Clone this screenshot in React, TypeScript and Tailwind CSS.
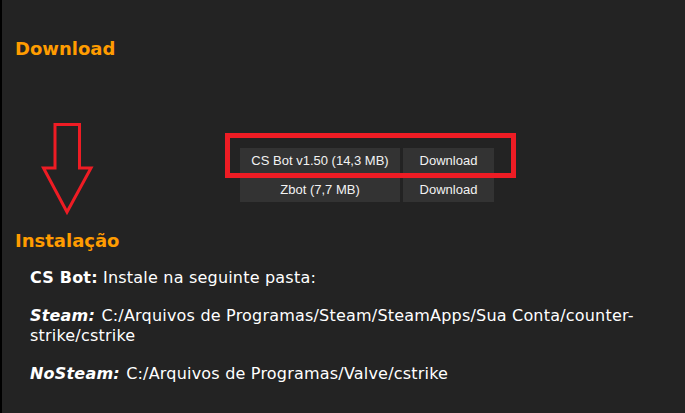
import React from "react";

export default function App() {
  return (
    <div className="relative h-[413px] w-[685px] overflow-hidden border-l-2 border-black bg-[#232323] font-['DejaVu_Sans',sans-serif] text-white">
      <h2 className="pl-[13px] pt-[38px] text-[18px] font-bold leading-[22px] text-[#ff9c00]">
        Download
      </h2>

      <div className="ml-[238px] mt-[88px] grid w-max grid-cols-[160px_91px] gap-[3px] font-['Liberation_Sans',Arial,sans-serif] text-[13px] text-[#f2f2f2]">
        <div className="flex h-[26px] items-center justify-center bg-[#333333]">CS Bot v1.50 (14,3 MB)</div>
        <div className="flex h-[26px] items-center justify-center bg-[#333333]">Download</div>
        <div className="flex h-[25px] items-center justify-center bg-[#333333]">Zbot (7,7 MB)</div>
        <div className="flex h-[25px] items-center justify-center bg-[#333333]">Download</div>
      </div>

      <h2 className="mt-[28px] pl-[13px] text-[18px] font-bold leading-[22px] text-[#ff9c00]">
        Instalação
      </h2>

      <div className="mt-[16px] pl-[28px] pr-[40px] text-[16px] leading-[20px] tracking-[0.2px]">
        <p>
          <b>CS Bot:</b> Instale na seguinte pasta:
        </p>
        <p className="mt-[18px]">
          <b className="italic pr-[1px]">Steam:</b> C:/Arquivos de Programas/Steam/SteamApps/Sua Conta/counter-strike/cstrike
        </p>
        <p className="mt-[18px]">
          <b className="italic pr-[1px]">NoSteam:</b> C:/Arquivos de Programas/Valve/cstrike
        </p>
      </div>

      {/* annotation: red box */}
      <div className="pointer-events-none absolute left-[223px] top-[133px] h-[45px] w-[291px] border-[5px] border-[#ee1c24]" />

      {/* annotation: red arrow */}
      <svg
        className="pointer-events-none absolute left-0 top-0"
        width="120"
        height="240"
        viewBox="0 0 120 240"
      >
        <polygon
          points="53,124.5 77.5,124.5 77.5,168 89,168 65,212 41.5,168 53,168"
          fill="none"
          stroke="#ee1c24"
          strokeWidth="3"
          strokeLinejoin="miter"
        />
      </svg>
    </div>
  );
}
